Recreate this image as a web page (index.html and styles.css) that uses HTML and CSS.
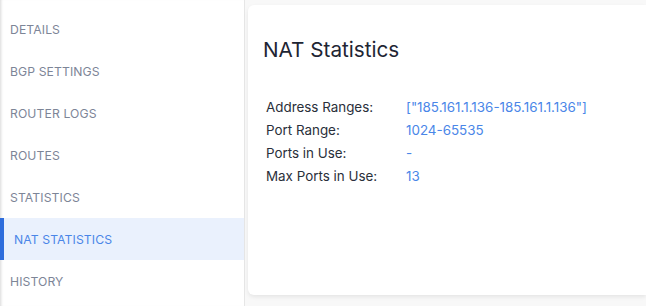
FILE: index.html
```html
<!DOCTYPE html>
<html>
<head>
<meta charset="utf-8">
<link rel="stylesheet" href="styles.css">
</head>
<body>
<div class="layout">
  <nav class="sidebar">
    <div class="nav-item">DETAILS</div>
    <div class="nav-item">BGP SETTINGS</div>
    <div class="nav-item">ROUTER LOGS</div>
    <div class="nav-item">ROUTES</div>
    <div class="nav-item">STATISTICS</div>
    <div class="nav-item active">NAT STATISTICS</div>
    <div class="nav-item">HISTORY</div>
  </nav>
  <main class="main">
    <section class="card">
      <h1 class="title">NAT Statistics</h1>
      <div class="stats">
        <div class="label">Address Ranges:</div><div class="value">["185.161.1.136-185.161.1.136"]</div>
        <div class="label">Port Range:</div><div class="value">1024-65535</div>
        <div class="label">Ports in Use:</div><div class="value">-</div>
        <div class="label">Max Ports in Use:</div><div class="value">13</div>
      </div>
    </section>
  </main>
</div>
</body>
</html>
```
FILE: styles.css
```css
html, body {
  margin: 0;
  padding: 0;
  width: 646px;
  height: 306px;
  overflow: hidden;
  font-family: Inter, "Noto Sans", sans-serif;
  background: #f8f8f8;
}
.layout {
  display: flex;
  height: 306px;
}
.sidebar {
  width: 244px;
  flex: none;
  background: #fff;
  border-right: 1px solid #e6e6e6;
  padding-top: 8px;
  box-shadow: inset 3px 0 3px -2px #d8d8d8;
}
.nav-item {
  height: 42px;
  display: flex;
  align-items: center;
  padding-left: 10px;
  font-size: 12.2px;
  color: #7d8597;
  letter-spacing: 0.1px;
}
.nav-item.active {
  background: #eaf1fd;
  border-left: 4px solid #2e6ddc;
  color: #4a86e8;
  padding-left: 10px;
}
.main {
  flex: 1;
  padding: 5px 0 0 3px;
  min-width: 0;
}
.card {
  background: #fff;
  border-radius: 6px 0 0 6px;
  height: 290px;
  box-sizing: border-box;
  padding: 33px 15px 0 15px;
  box-shadow: 0 2px 4px rgba(0,0,0,0.08);
}
.title {
  margin: 0;
  font-size: 20.7px;
  font-weight: 400;
  color: #1e2533;
  line-height: 24px;
}
.stats {
  margin-top: 34px;
  margin-left: 3px;
  display: grid;
  grid-template-columns: 140px auto;
  row-gap: 0;
  font-size: 13.4px;
  line-height: 23px;
}
.label {
  color: #2a2f3a;
}
.value {
  color: #4a86e8;
}
```
